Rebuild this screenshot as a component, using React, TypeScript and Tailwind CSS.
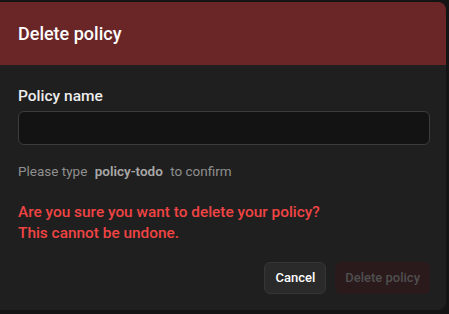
import React, { useState } from 'react';

export default function App() {
  const [name, setName] = useState('');
  const matches = name === 'policy-todo';

  return (
    <div
      className="w-[449px] h-[314px] bg-[#141414] pt-[2px] pr-[3px] pb-[4px] overflow-hidden"
      style={{ fontFamily: 'Roboto, "Noto Sans", sans-serif' }}
    >
      <div className="h-full bg-[#1f1f1f] rounded-r-lg overflow-hidden flex flex-col">
        {/* Header */}
        <div className="h-[63px] bg-[#6a2627] flex items-center px-[18px]">
          <h2 className="text-[18px] font-medium text-white">Delete policy</h2>
        </div>

        {/* Body */}
        <div className="flex-1 pl-[18px] pr-[16px] pt-[20px]">
          <label className="block text-[15.5px] font-medium text-[#ededed] mb-[4px] leading-[22px]">
            Policy name
          </label>
          <input
            value={name}
            onChange={(e) => setName(e.target.value)}
            className="w-full h-[34px] bg-[#131313] border border-[#3c3c3c] rounded-md px-3 text-sm text-white outline-none"
          />
          <p className="mt-[16px] text-[13.5px] text-[#8f8f8f] leading-[20px]">
            Please type <span className="font-semibold text-[#a8a8a8] mx-1">policy-todo</span> to confirm
          </p>

          <div className="mt-[21px] text-[15.4px] font-medium text-[#ef4444] leading-[21px]">
            <p>Are you sure you want to delete your policy?</p>
            <p>This cannot be undone.</p>
          </div>

          <div className="flex justify-end gap-[9px] mt-[18px]">
            <button className="h-[32px] px-[10px] rounded-md bg-[#2a2a2a] border border-[#363636] text-[13px] font-medium text-white">
              Cancel
            </button>
            <button
              disabled={!matches}
              className="h-[32px] px-[10px] rounded-md bg-[#2a1a1b] text-[13px] font-medium text-[#4f4f4f]"
            >
              Delete policy
            </button>
          </div>
        </div>
      </div>
    </div>
  );
}
